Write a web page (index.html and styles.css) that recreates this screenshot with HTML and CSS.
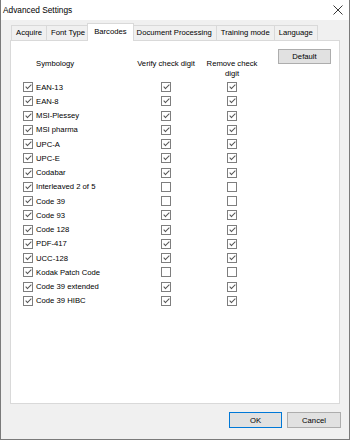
FILE: index.html
```html
<!DOCTYPE html>
<html lang="en">
<head>
    <meta charset="UTF-8">
    <meta name="viewport" content="width=device-width, initial-scale=1.0">
    <title>Advanced Settings</title>
    <link rel="stylesheet" href="styles.css">
</head>
<body>
    <div class="window">
        <div class="titlebar">
            <span class="title">Advanced Settings</span>
            <svg class="close" width="10" height="10" viewBox="0 0 10 10">
                <path d="M0.5 0.5 L9.5 9.5 M9.5 0.5 L0.5 9.5" stroke="#222" stroke-width="0.9" fill="none"/>
            </svg>
        </div>
        <div class="dialog">
            <div class="tabs">
                <div class="tab">Acquire</div>
                <div class="tab">Font Type</div>
                <div class="tab active">Barcodes</div>
                <div class="tab">Document Processing</div>
                <div class="tab">Training mode</div>
                <div class="tab">Language</div>
            </div>
            <div class="panel">
                <div class="grid">
                    <div class="hd hd-sym">Symbology</div>
                    <div class="hd">Verify check digit</div>
                    <div class="hd">Remove check<br>digit</div>

                    <div class="cell name"><span class="cb on"></span>EAN-13</div>
                    <div class="cell"><span class="cb on"></span></div>
                    <div class="cell"><span class="cb on"></span></div>

                    <div class="cell name"><span class="cb on"></span>EAN-8</div>
                    <div class="cell"><span class="cb on"></span></div>
                    <div class="cell"><span class="cb on"></span></div>

                    <div class="cell name"><span class="cb on"></span>MSI-Plessey</div>
                    <div class="cell"><span class="cb on"></span></div>
                    <div class="cell"><span class="cb on"></span></div>

                    <div class="cell name"><span class="cb on"></span>MSI pharma</div>
                    <div class="cell"><span class="cb on"></span></div>
                    <div class="cell"><span class="cb on"></span></div>

                    <div class="cell name"><span class="cb on"></span>UPC-A</div>
                    <div class="cell"><span class="cb on"></span></div>
                    <div class="cell"><span class="cb on"></span></div>

                    <div class="cell name"><span class="cb on"></span>UPC-E</div>
                    <div class="cell"><span class="cb on"></span></div>
                    <div class="cell"><span class="cb on"></span></div>

                    <div class="cell name"><span class="cb on"></span>Codabar</div>
                    <div class="cell"><span class="cb on"></span></div>
                    <div class="cell"><span class="cb on"></span></div>

                    <div class="cell name"><span class="cb on"></span>Interleaved 2 of 5</div>
                    <div class="cell"><span class="cb"></span></div>
                    <div class="cell"><span class="cb"></span></div>

                    <div class="cell name"><span class="cb on"></span>Code 39</div>
                    <div class="cell"><span class="cb"></span></div>
                    <div class="cell"><span class="cb"></span></div>

                    <div class="cell name"><span class="cb on"></span>Code 93</div>
                    <div class="cell"><span class="cb on"></span></div>
                    <div class="cell"><span class="cb on"></span></div>

                    <div class="cell name"><span class="cb on"></span>Code 128</div>
                    <div class="cell"><span class="cb on"></span></div>
                    <div class="cell"><span class="cb on"></span></div>

                    <div class="cell name"><span class="cb on"></span>PDF-417</div>
                    <div class="cell"><span class="cb on"></span></div>
                    <div class="cell"><span class="cb on"></span></div>

                    <div class="cell name"><span class="cb on"></span>UCC-128</div>
                    <div class="cell"><span class="cb on"></span></div>
                    <div class="cell"><span class="cb on"></span></div>

                    <div class="cell name"><span class="cb on"></span>Kodak Patch Code</div>
                    <div class="cell"><span class="cb"></span></div>
                    <div class="cell"><span class="cb"></span></div>

                    <div class="cell name"><span class="cb on"></span>Code 39 extended</div>
                    <div class="cell"><span class="cb on"></span></div>
                    <div class="cell"><span class="cb on"></span></div>

                    <div class="cell name"><span class="cb on"></span>Code 39 HIBC</div>
                    <div class="cell"><span class="cb on"></span></div>
                    <div class="cell"><span class="cb on"></span></div>
                </div>
                <button class="btn default-btn">Default</button>
            </div>
            <div class="actions">
                <button class="btn ok">OK</button>
                <button class="btn">Cancel</button>
            </div>
        </div>
    </div>
</body>
</html>
```

FILE: styles.css
```css
body {
    margin: 0;
    font-family: "Liberation Sans", Arial, sans-serif;
    font-size: 7.7px;
    color: #000;
    background-color: #ffffff;
}

.window {
    width: 350px;
    height: 440px;
    box-sizing: border-box;
    border: 1px solid #7a7a7a;
    border-top: none;
    display: flex;
    flex-direction: column;
}

.titlebar {
    height: 20px;
    background-color: #ffffff;
    display: flex;
    align-items: center;
    padding: 0 6px 0 2px;
}

.title {
    font-size: 8.3px;
    flex: 1;
}

.close {
    display: block;
}

.dialog {
    flex: 1;
    background-color: #f0f0f0;
    display: flex;
    flex-direction: column;
    padding: 3px 9px 11px 9px;
}

/* tab strip */
.tabs {
    display: flex;
    align-items: flex-end;
    padding-left: 2px;
    height: 17px;
}

.tab {
    height: 14px;
    line-height: 14px;
    padding: 0 4px;
    border: 1px solid #d9d9d9;
    border-bottom: none;
    margin-left: -1px;
    background-color: #f0f0f0;
}

.tab.active {
    height: 17px;
    line-height: 15px;
    background-color: #ffffff;
    margin: 0 -2px -1px -3px;
    padding: 0 6px;
    position: relative;
    z-index: 1;
}

.tab.active + .tab {
    margin-left: 0;
}

.panel {
    flex: 1;
    background-color: #ffffff;
    border: 1px solid #d9d9d9;
    display: flex;
    align-items: flex-start;
    padding: 8px 8px 0 12px;
}

.grid {
    display: grid;
    grid-template-columns: 113px 60px 72px;
    grid-auto-rows: 14.25px;
    grid-template-rows: auto;
    margin-top: 10px;
}

.hd {
    line-height: 9.5px;
    text-align: center;
    justify-self: center;
    white-space: nowrap;
    padding-bottom: 2px;
}

.hd-sym {
    justify-self: start;
    text-align: left;
    padding-left: 13px;
}

.cell {
    display: flex;
    align-items: center;
    justify-content: center;
    white-space: nowrap;
}

.cell.name {
    justify-content: flex-start;
}

.cb {
    width: 10px;
    height: 10px;
    box-sizing: border-box;
    border: 1px solid #7e7e7e;
    background-color: #ffffff;
    position: relative;
    flex-shrink: 0;
}

.name .cb {
    margin-right: 3px;
}

.cb.on::after {
    content: "";
    position: absolute;
    left: 3px;
    top: 0px;
    width: 2px;
    height: 5px;
    border: solid #555555;
    border-width: 0 1px 1px 0;
    transform: rotate(45deg);
}

.btn {
    font-family: "Liberation Sans", Arial, sans-serif;
    font-size: 7.7px;
    color: #000;
    background-color: #e1e1e1;
    border: 1px solid #adadad;
    padding: 0;
    height: 16px;
    width: 54px;
}

.default-btn {
    margin-left: auto;
    width: 53px;
    height: 15px;
}

.actions {
    display: flex;
    justify-content: flex-end;
    gap: 5px;
    margin-top: 8px;
    margin-right: -1px;
}

.ok {
    border-color: #0078d7;
    width: 53px;
}
```
